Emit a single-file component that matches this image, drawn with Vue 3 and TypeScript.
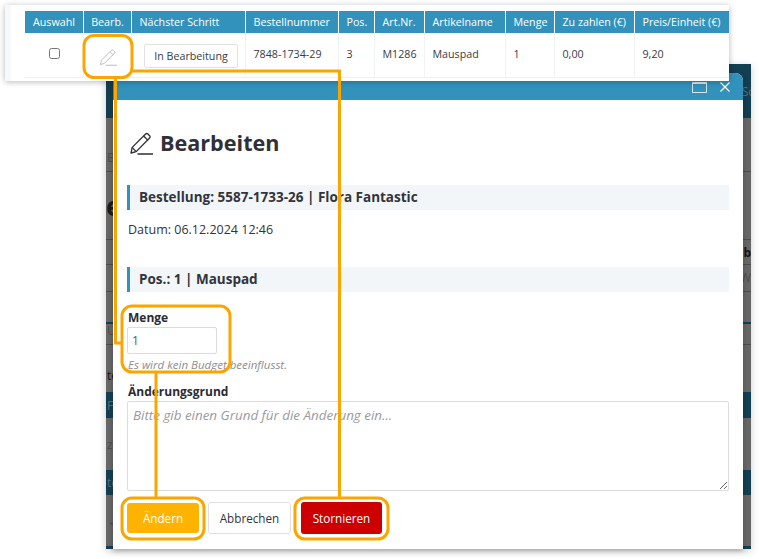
<script setup lang="ts">
interface Col { label: string; width: number; value: string; align?: string }
const cols: Col[] = [
  { label: 'Auswahl', width: 59, value: '' },
  { label: 'Bearb.', width: 48, value: '' },
  { label: 'Nächster Schritt', width: 114, value: '' },
  { label: 'Bestellnummer', width: 93, value: '7848-1734-29' },
  { label: 'Pos.', width: 36, value: '3' },
  { label: 'Art.Nr.', width: 50, value: 'M1286' },
  { label: 'Artikelname', width: 81, value: 'Mauspad' },
  { label: 'Menge', width: 49, value: '1' },
  { label: 'Zu zahlen (€)', width: 80, value: '0,00' },
  { label: 'Preis/Einheit (€)', width: 94, value: '9,20' },
]
interface Strip { h: number; kind: string; left?: string; right?: string }
const strips: Strip[] = [
  { h: 54, kind: 'teal', right: 'Sc' },
  { h: 54, kind: 'gray line', left: 'B' },
  { h: 68, kind: 'gray big line', left: 'e' },
  { h: 25, kind: 'gray line strong', right: 'b' },
  { h: 27, kind: 'gray line', right: 'W' },
  { h: 30, kind: 'gray' },
  { h: 23, kind: 'gray tealtop line', left: 'UE' },
  { h: 47, kind: 'gray dark', left: 'te' },
  { h: 26, kind: 'teal', left: 'F H' },
  { h: 52, kind: 'gray', left: 'ze' },
  { h: 25, kind: 'teal', left: 'te' },
  { h: 51, kind: 'gray', left: '⌄' },
  { h: 3, kind: 'teal' },
]
</script>

<template>
  <div class="canvas">
    <div class="backdrop">
      <div v-for="(s, i) in strips" :key="i" class="strip" :class="s.kind" :style="{ height: s.h + 'px' }">
        <span>{{ s.left }}</span>
        <span>{{ s.right }}</span>
      </div>
    </div>

    <section class="modal">
      <header class="modal-bar">
        <span class="win-icon"></span>
        <svg class="close" viewBox="0 0 10 10" width="10" height="10">
          <path d="M0.5 0.5 9.5 9.5M9.5 0.5 0.5 9.5" stroke="#fff" stroke-width="1.2" fill="none" />
        </svg>
      </header>
      <div class="modal-body">
        <h1 class="title">
          <svg viewBox="0 0 24 24" width="24" height="24" fill="none" stroke="#2f2f35" stroke-width="1.3" stroke-linejoin="round">
            <path d="M2 22l1.2-5.6L16.6 3a1.6 1.6 0 0 1 2.3 0l1.7 1.7a1.6 1.6 0 0 1 0 2.3L7.2 20.6z" />
            <path d="M14.6 5l4.4 4.4M3.2 16.4l4 4.2M8.5 23H24" />
          </svg>
          Bearbeiten
        </h1>
        <h2 class="section first">Bestellung: 5587-1733-26 | Flora Fantastic</h2>
        <p class="date">Datum: 06.12.2024 12:46</p>
        <h2 class="section second">Pos.: 1 | Mauspad</h2>
        <label class="label qty-label">Menge</label>
        <input class="qty" value="1" />
        <p class="hint">Es wird kein Budget beeinflusst.</p>
        <label class="label reason-label">Änderungsgrund</label>
        <textarea class="reason" placeholder="Bitte gib einen Grund für die Änderung ein..."></textarea>
        <div class="actions">
          <button class="btn amber">Ändern</button>
          <button class="btn plain">Abbrechen</button>
          <button class="btn red">Stornieren</button>
        </div>
      </div>
    </section>

    <div class="table-card">
      <table>
        <thead>
          <tr>
            <th v-for="c in cols" :key="c.label" :style="{ width: c.width + 'px' }" :class="{ centered: c.label === 'Auswahl' || c.label === 'Bearb.' }">{{ c.label }}</th>
          </tr>
        </thead>
        <tbody>
          <tr>
            <td v-for="c in cols" :key="c.label">
              <input v-if="c.label === 'Auswahl'" type="checkbox" class="check" />
              <svg v-else-if="c.label === 'Bearb.'" class="row-pencil" viewBox="0 0 24 24" width="18" height="18" fill="none" stroke="#b9bcc2" stroke-width="1.3" stroke-linejoin="round">
                <path d="M2 22l1.2-5.6L16.6 3a1.6 1.6 0 0 1 2.3 0l1.7 1.7a1.6 1.6 0 0 1 0 2.3L7.2 20.6z" />
                <path d="M14.6 5l4.4 4.4M8.5 23H24" />
              </svg>
              <button v-else-if="c.label === 'Nächster Schritt'" class="step">In Bearbeitung</button>
              <template v-else>{{ c.value }}</template>
            </td>
          </tr>
        </tbody>
      </table>
    </div>

    <svg class="annotations" viewBox="0 0 759 559" width="759" height="559" fill="none" stroke="#fba500" stroke-width="3">
      <rect x="84" y="35.5" width="48" height="42" rx="10" />
      <rect x="122" y="306" width="108" height="66" rx="10" />
      <rect x="122" y="498" width="82" height="41" rx="10" />
      <rect x="295" y="498" width="93" height="41" rx="10" />
      <path d="M132 71H339.5V498" />
      <path d="M115.5 78V343H122" />
      <path d="M156 372V498" />
    </svg>
  </div>
</template>

<style>
html, body { margin: 0; background: #fff; }
</style>

<style scoped>
.canvas {
  position: relative;
  width: 759px;
  height: 559px;
  overflow: hidden;
  background: #fff;
  font-family: "Open Sans", "Liberation Sans", sans-serif;
  color: #33333b;
}
.backdrop {
  position: absolute;
  left: 106px;
  top: 64px;
  width: 645px;
  display: flex;
  flex-direction: column;
  box-shadow: 0 2px 8px rgba(0, 0, 0, 0.2);
}
.strip {
  box-sizing: border-box;
  display: flex;
  justify-content: space-between;
  align-items: center;
  overflow: hidden;
  font-size: 12px;
  color: #4c4c4c;
  padding: 0 0 0 1px;
}
.strip.teal { background: #133f52; color: #56717d; }
.strip.teal:first-child span:last-child { margin-right: -3px; }
.strip.gray { background: #676767; }
.strip.line { border-bottom: 1px solid #4b4b4b; align-items: flex-end; padding-bottom: 5px; }
.strip.big { font-size: 26px; font-weight: 700; color: #1b1b1b; align-items: center; padding-bottom: 0; }
.strip.big span:first-child { margin-left: -1px; }
.strip.strong { font-weight: 700; color: #151515; padding-bottom: 3px; }
.strip.dark { color: #151515; align-items: flex-end; padding-bottom: 8px; }
.strip.tealtop { border-top: 2px solid #133f52; }

.modal {
  position: absolute;
  left: 113px;
  top: 73px;
  width: 630px;
  height: 476px;
  display: flex;
  flex-direction: column;
  background: #fff;
  border-radius: 8px 8px 0 0;
  box-shadow: 0 2px 5px rgba(0, 0, 0, 0.25);
}
.modal-bar {
  flex: none;
  height: 27px;
  background: #3292bc;
  border-radius: 8px 8px 0 0;
  display: flex;
  justify-content: flex-end;
  align-items: flex-start;
  gap: 13px;
  padding: 9px 13px 0 0;
  box-sizing: border-box;
}
.win-icon {
  box-sizing: border-box;
  width: 15px;
  height: 11px;
  border: 1px solid #d5e8f1;
  border-top-width: 2px;
  border-radius: 1px;
}
.close { display: block; }
.modal-body {
  padding: 0 14px;
  display: flex;
  flex-direction: column;
  align-items: flex-start;
}
.title {
  margin: 27px 0 0 2px;
  height: 32px;
  display: flex;
  align-items: center;
  gap: 7px;
  font-size: 21.6px;
  font-weight: 700;
  line-height: 32px;
  color: #303038;
}
.section {
  box-sizing: border-box;
  width: 602px;
  height: 25px;
  margin: 0;
  padding-left: 9px;
  border-left: 3px solid #3292bc;
  background: #f2f6f9;
  font-size: 13.5px;
  font-weight: 700;
  line-height: 24px;
  color: #33333b;
}
.section.first { margin-top: 26px; }
.section.second { margin-top: 28px; }
.date { margin: 11px 0 0 1px; height: 18px; font-size: 12.5px; line-height: 18px; }
.label { font-size: 12px; font-weight: 700; line-height: 16px; color: #2b2b33; }
.qty-label { margin-top: 18px; margin-left: 1px; height: 17px; }
.qty {
  box-sizing: border-box;
  width: 90px;
  height: 27px;
  margin: 0;
  padding: 0 4px;
  border: 1px solid #dcdcdc;
  border-radius: 2px;
  font: 12px "Open Sans", sans-serif;
  color: #4a5a78;
  outline: none;
}
.hint { margin: 3px 0 0 1px; font-size: 11.5px; font-style: italic; line-height: 15px; color: #8c8c94; }
.reason-label { margin-top: 12px; height: 15px; margin-left: 1px; }
.reason {
  box-sizing: border-box;
  display: block;
  width: 602px;
  height: 90px;
  margin: 2px 0 0;
  padding: 4px 5px;
  border: 1px solid #dcdcdc;
  border-radius: 2px;
  font: italic 13.4px "Open Sans", sans-serif;
  outline: none;
}
.reason::placeholder { color: #9a9aa0; opacity: 1; }
.actions { display: flex; align-items: center; margin-top: 11px; height: 32px; }
.btn {
  box-sizing: border-box;
  height: 32px;
  padding: 0;
  border-radius: 3px;
  border: 1px solid transparent;
  font: 11.7px "Open Sans", sans-serif;
}
.amber { width: 72px; height: 30px; background: #fdb300; color: #fff; margin-right: 9px; }
.plain { width: 83px; background: #fff; border-color: #e0e0e0; color: #33333b; margin-right: 10px; }
.red { width: 81px; background: #cc0000; color: #fff; }

.table-card {
  position: absolute;
  left: 5px;
  top: 5px;
  width: 724px;
  height: 76px;
  box-sizing: border-box;
  padding: 6px 1px 0 20px;
  background: linear-gradient(90deg, #f5f9fc 0 6px, #fff 6px);
  box-shadow: 0 1px 6px rgba(0, 0, 0, 0.28);
}
table {
  table-layout: fixed;
  width: 703px;
  border-collapse: separate;
  border-spacing: 0;
  font-size: 10.7px;
}
th {
  box-sizing: border-box;
  height: 22px;
  padding: 0 0 0 7.5px;
  background: #3292bc;
  color: #fff;
  font-weight: 400;
  text-align: left;
  white-space: nowrap;
  border-right: 1px solid #fff;
}
th:last-child { border-right: 0; }
th.centered { padding: 0; text-align: center; }
td {
  box-sizing: border-box;
  height: 45px;
  padding: 0 0 2px 7.5px;
  border-right: 1px solid #f0f3f6;
  border-bottom: 1px solid #eef1f4;
  color: #3a3a44;
  white-space: nowrap;
}
td:first-child, td:nth-child(2) { padding: 0; text-align: center; }
td:last-child { border-right: 0; }
.check { display: inline-block; width: 11px; height: 11px; margin: 0 0 4px; accent-color: #666; }
.row-pencil { display: inline-block; vertical-align: middle; margin-top: 3px; }
.step {
  box-sizing: border-box;
  width: 94px;
  height: 24px;
  margin: 3px 0 0 4.5px;
  padding: 0;
  background: #fff;
  border: 1px solid #e2e2e2;
  border-radius: 2px;
  font: 10.7px "Open Sans", sans-serif;
  color: #3a3a44;
}
.annotations { position: absolute; left: 0; top: 0; pointer-events: none; }
</style>
